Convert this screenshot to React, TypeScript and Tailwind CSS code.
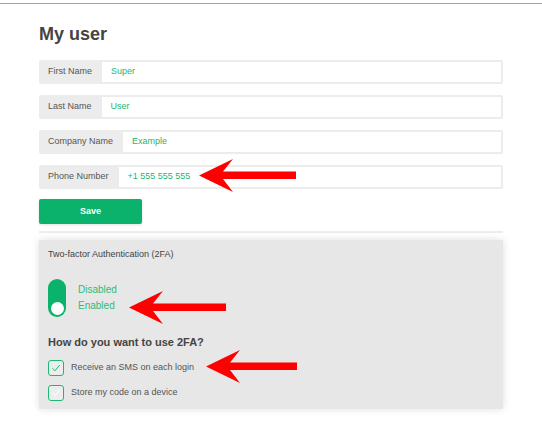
import React from "react";

// Profile form with red annotation arrows

type Field = { label: string; value: string };

const fields: Field[] = [
  { label: "First Name", value: "Super" },
  { label: "Last Name", value: "User" },
  { label: "Company Name", value: "Example" },
  { label: "Phone Number", value: "+1 555 555 555" },
];

const Arrow = ({ className, len }: { className: string; len: number }) => (
  <svg
    className={`absolute ${className}`}
    width={len}
    height={33}
    viewBox={`0 0 ${len} 33`}
  >
    <polygon
      points={`0,16.5 34,0 24,12.5 ${len},12.5 ${len},20 24,20 34,33`}
      fill="#ff0000"
    />
  </svg>
);

const FieldRow = ({ label, value }: Field) => (
  <div className="flex h-6 border-2 border-[#ececec] rounded-[2px] bg-white">
    <div className="flex items-center bg-[#ececec] pl-[7px] pr-[10px] text-[9px] text-[#555]">
      {label}
    </div>
    <div className="flex flex-1 items-center px-[9px] text-[9px] text-[#22b673]">
      {value}
    </div>
  </div>
);

const CheckBox = ({ checked }: { checked: boolean }) => (
  <div className="flex h-4 w-4 items-center justify-center rounded-[3px] border-[1.5px] border-[#1fb873] bg-[#eceeed]">
    <svg width="10" height="10" viewBox="0 0 10 10">
      <path
        d="M1.5 5.3 L4 7.8 L8.6 2.2"
        fill="none"
        stroke={checked ? "#1fb873" : "#ffffff"}
        strokeWidth="1"
      />
    </svg>
  </div>
);

const App = () => {
  return (
    <div className="relative min-h-[448px] w-[542px] bg-white font-['Liberation_Sans',Arial,sans-serif]">
      <div className="h-[3px]" />
      <div className="h-px bg-[#6cc0a0]" />

      <div className="ml-[39px] w-[464px] pt-[19px]">
        <h1 className="text-[18px] leading-[22px] font-bold text-[#444]">
          My user
        </h1>

        <div className="mt-[15px] flex flex-col gap-[11px]">
          {fields.map((f) => (
            <FieldRow key={f.label} label={f.label} value={f.value} />
          ))}
        </div>

        <button className="mt-[10px] flex h-[25px] w-[103px] items-center justify-center rounded-[2px] bg-[#0bb26b] text-[9px] font-bold text-white shadow-[0_1px_3px_rgba(0,0,0,0.12)]">
          Save
        </button>

        <div className="mt-[7px] h-[2px] bg-[#ededed]" />

        <div className="mt-[7px] bg-[#e6e7e6] px-[9px] pt-[8px] pb-[8px] shadow-[0_0_8px_rgba(0,0,0,0.13)]">
          <p className="text-[9px] leading-[12px] text-[#444]">
            Two-factor Authentication (2FA)
          </p>

          <div className="mt-[19px] flex items-center gap-3">
            <div className="flex h-[38px] w-[18px] flex-col justify-end rounded-full bg-[#0bb26b] p-[2.5px]">
              <div className="h-[13px] w-[13px] rounded-full bg-white" />
            </div>
            <div className="flex flex-col text-[10px] leading-[16px] text-[#2cbb7b]">
              <span>Disabled</span>
              <span>Enabled</span>
            </div>
          </div>

          <h2 className="mt-[18px] text-[11px] leading-[14px] font-bold text-[#444]">
            How do you want to use 2FA?
          </h2>

          <div className="mt-[11px] flex flex-col gap-[9px]">
            <label className="flex items-center gap-[7px] text-[9px] text-[#555]">
              <CheckBox checked={true} />
              Receive an SMS on each login
            </label>
            <label className="flex items-center gap-[7px] text-[9px] text-[#555]">
              <CheckBox checked={false} />
              Store my code on a device
            </label>
          </div>
        </div>
      </div>

      <Arrow className="left-[199px] top-[159px]" len={97} />
      <Arrow className="left-[129px] top-[291px]" len={97} />
      <Arrow className="left-[206px] top-[350px]" len={91} />
    </div>
  );
};

export default App;
